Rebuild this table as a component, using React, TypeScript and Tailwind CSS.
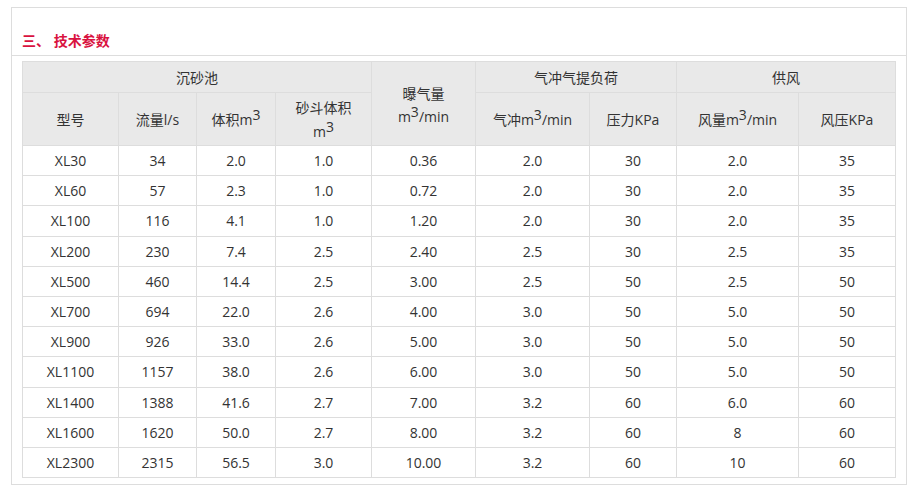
import React from "react";

const rows: string[][] = [
  ["XL30", "34", "2.0", "1.0", "0.36", "2.0", "30", "2.0", "35"],
  ["XL60", "57", "2.3", "1.0", "0.72", "2.0", "30", "2.0", "35"],
  ["XL100", "116", "4.1", "1.0", "1.20", "2.0", "30", "2.0", "35"],
  ["XL200", "230", "7.4", "2.5", "2.40", "2.5", "30", "2.5", "35"],
  ["XL500", "460", "14.4", "2.5", "3.00", "2.5", "50", "2.5", "50"],
  ["XL700", "694", "22.0", "2.6", "4.00", "3.0", "50", "5.0", "50"],
  ["XL900", "926", "33.0", "2.6", "5.00", "3.0", "50", "5.0", "50"],
  ["XL1100", "1157", "38.0", "2.6", "6.00", "3.0", "50", "5.0", "50"],
  ["XL1400", "1388", "41.6", "2.7", "7.00", "3.2", "60", "6.0", "60"],
  ["XL1600", "1620", "50.0", "2.7", "8.00", "3.2", "60", "8", "60"],
  ["XL2300", "2315", "56.5", "3.0", "10.00", "3.2", "60", "10", "60"],
];

const widths = [96, 78, 79, 96, 104, 114, 87, 122, 97];

const th = "border border-[#dddddd] bg-[#e9e9e9] font-normal text-center align-middle p-0";
const Sup = () => <span className="relative top-[-5px] text-[14px] leading-none">3</span>;

const App: React.FC = () => {
  return (
    <div
      className="w-[915px] h-[496px] bg-white pt-[7px] pl-[11px] text-[#333333]"
      style={{ fontFamily: '"Open Sans", "Noto Sans CJK SC", sans-serif' }}
    >
      <div className="w-[896px] h-[478px] border border-[#dddddd]">
        <div className="h-[48px] border-b border-[#dddddd] flex items-end pl-[10px] pb-[5px]">
          <h3 className="text-[14px] font-bold text-[#d9123f] leading-[18px]">三、 技术参数</h3>
        </div>
        <div className="pl-[10px] pt-[5px]">
          <table className="border-collapse table-fixed w-[874px] text-[14px] leading-[21px]">
            <colgroup>
              {widths.map((w, i) => (
                <col key={i} style={{ width: w }} />
              ))}
            </colgroup>
            <thead>
              <tr className="h-[31px]">
                <th colSpan={4} className={th}>沉砂池</th>
                <th rowSpan={2} className={`${th} leading-[23px] pt-[2px]`}>
                  <div>曝气量</div>
                  <div>m<Sup />/min</div>
                </th>
                <th colSpan={2} className={th}>气冲气提负荷</th>
                <th colSpan={2} className={th}>供风</th>
              </tr>
              <tr className="h-[53px]">
                <th className={th}>型号</th>
                <th className={th}>流量l/s</th>
                <th className={th}>体积m<Sup /></th>
                <th className={`${th} leading-[24px] pt-[2px]`}>
                  <div>砂斗体积</div>
                  <div>m<Sup /></div>
                </th>
                <th className={th}>气冲m<Sup />/min</th>
                <th className={th}>压力KPa</th>
                <th className={th}>风量m<Sup />/min</th>
                <th className={th}>风压KPa</th>
              </tr>
            </thead>
            <tbody>
              {rows.map((r, i) => (
                <tr key={i} className="h-[30.2px]">
                  {r.map((c, j) => (
                    <td key={j} className="border border-[#dddddd] text-center p-0">
                      {c}
                    </td>
                  ))}
                </tr>
              ))}
            </tbody>
          </table>
        </div>
      </div>
    </div>
  );
};

export default App;
